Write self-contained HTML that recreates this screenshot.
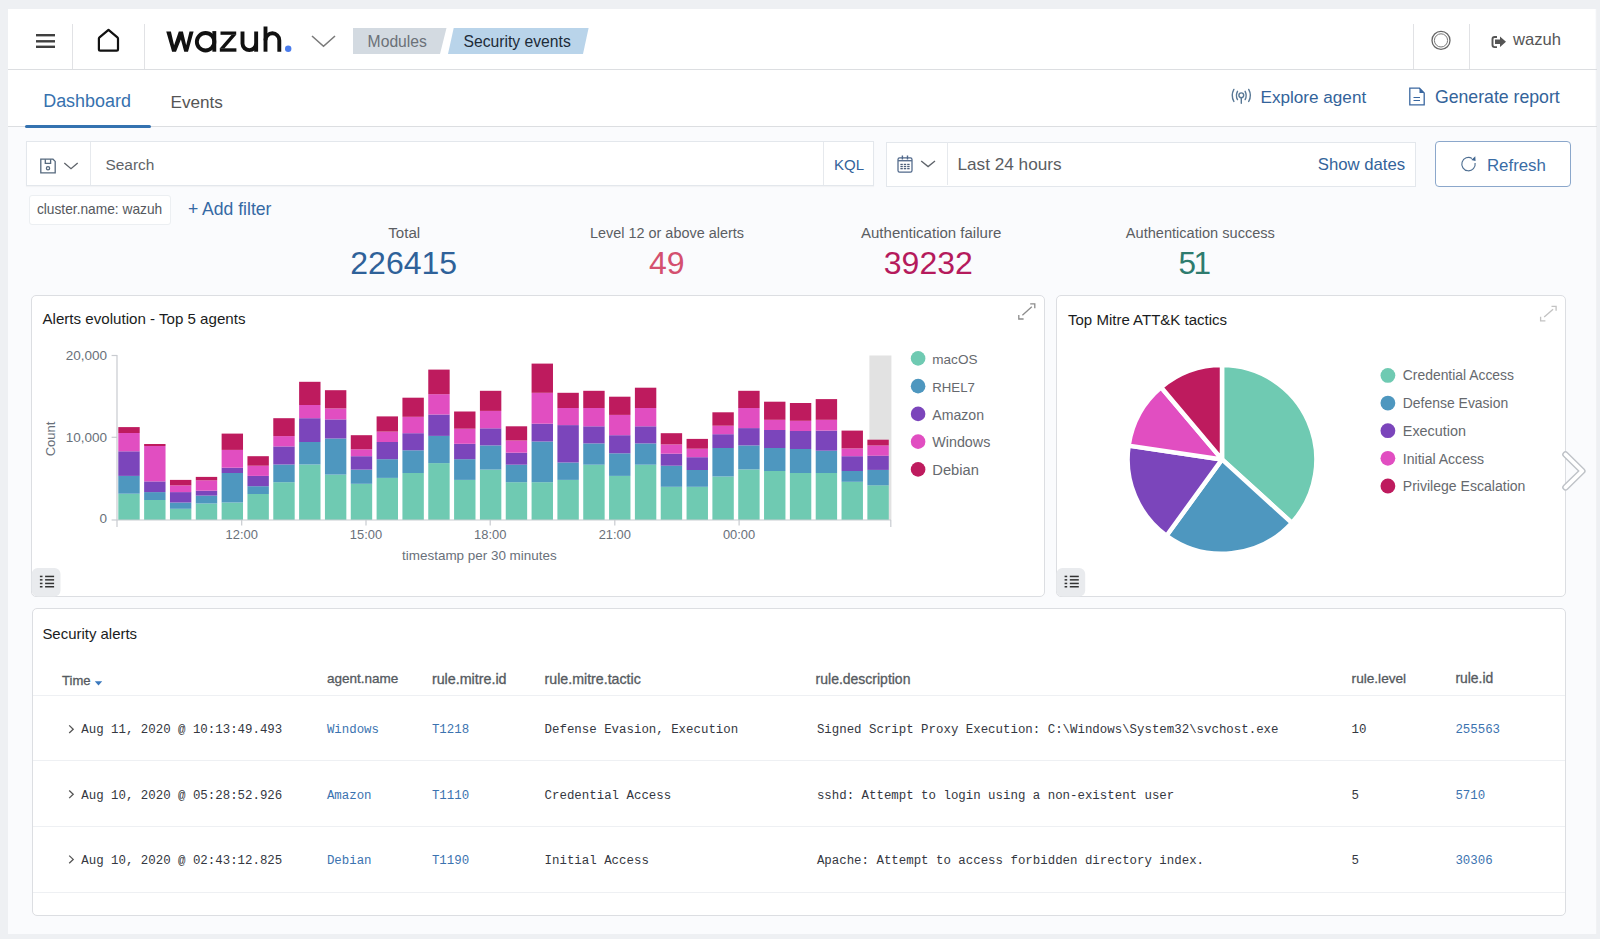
<!DOCTYPE html>
<html><head><meta charset="utf-8"><title>Wazuh - Security events</title>
<style>
html,body{margin:0;padding:0}
body{width:1600px;height:939px;position:relative;overflow:hidden;background:#eef0f3;font-family:'Liberation Sans', sans-serif}
svg{overflow:visible}
</style></head><body>
<div style="position:absolute;left:8px;top:9px;width:1589px;height:925px;background:#f1f2f4"></div>
<div style="position:absolute;left:8px;top:9px;width:1588px;height:925px;background:#fafbfd"></div>
<div style="position:absolute;left:8px;top:9px;width:1587px;height:60px;background:#fff"></div>
<div style="position:absolute;left:8px;top:69px;width:1589px;height:1px;background:#dcdee1"></div>
<div style="position:absolute;left:72px;top:24px;width:1px;height:45px;background:#e1e2e5"></div>
<div style="position:absolute;left:144px;top:24px;width:1px;height:45px;background:#e1e2e5"></div>
<div style="position:absolute;left:1413px;top:24px;width:1px;height:45px;background:#e1e2e5"></div>
<div style="position:absolute;left:1468.6px;top:24px;width:1px;height:45px;background:#e1e2e5"></div>
<div style="position:absolute;left:8px;top:70px;width:1587px;height:56px;background:#fff"></div>
<div style="position:absolute;left:8px;top:126px;width:1589px;height:1px;background:#dcdee1"></div>
<div style="position:absolute;left:25px;top:124.9px;width:126px;height:3px;background:#3472b0;border-radius:1.5px"></div>
<svg style="position:absolute;left:0px;top:0px" width="1600" height="939" viewBox="0 0 1600 939">
<g fill="#3f3f3f"><rect x="36" y="34" width="19" height="2.4"/><rect x="36" y="40.1" width="19" height="2.4"/><rect x="36" y="45.6" width="19" height="2.4"/></g>
<path d="M98.9,49.2 Q98.9,50.6 100.3,50.6 H116.6 Q118,50.6 118,49.2 V38.6 Q118,37.8 117.4,37.3 L108.5,29.8 L99.5,37.3 Q98.9,37.8 98.9,38.6 Z" fill="none" stroke="#111" stroke-width="2.2" stroke-linejoin="round"/>
<polygon points="166.25,31.5 170.9,31.5 174.1,45.3 178.8,31.5 182.9,31.5 186.2,45.3 189.5,31.5 193.6,31.5 188,51.75 184.25,51.75 180.9,39.5 176,51.75 172.1,51.75" fill="#111"/>
<g fill="none" stroke="#111" stroke-width="3.9">
<circle cx="205.6" cy="41.8" r="8.75"/>
<path d="M214.3,31.1 V51.7"/>
<path d="M242.5,31.5 V43.6 A6.83,6.83 0 0 0 256.15,43.6"/><path d="M256.15,31.5 V51.7"/>
<path d="M265.5,26.5 V51.7"/><path d="M265.5,40.15 A6.9,6.9 0 0 1 279.3,40.15 V51.7"/>
</g>
<g fill="#111"><rect x="220.5" y="31.5" width="15.7" height="3.3"/><rect x="219.8" y="48.3" width="16.6" height="3.4"/><polygon points="231.6,34.7 236.2,34.7 224.3,48.4 219.7,48.4"/></g>
<circle cx="288.2" cy="48.8" r="3.2" fill="#4a7cec"/>
<path d="M312,36 L323.5,46.3 L335,36" fill="none" stroke="#7a7a7a" stroke-width="1.6"/>
<polygon points="353,28 446.5,28 440,54 353,54" fill="#d3dae1"/>
<polygon points="453.7,28 588.6,28 583,54 448,54" fill="#b9d4ea"/>
<circle cx="1441" cy="40.4" r="9" fill="none" stroke="#666" stroke-width="1.3"/>
<circle cx="1441" cy="40.4" r="6.6" fill="none" stroke="#777" stroke-width="1"/>
<path d="M1497,37 H1494.6 Q1492.5,37 1492.5,39.1 V45 Q1492.5,47.1 1494.6,47.1 H1497" fill="none" stroke="#555" stroke-width="1.9"/>
<path d="M1495,39.5 H1500 V36.5 L1506,41.8 L1500,47 V44 H1495 Z" fill="#555"/>
</svg>
<div style="position:absolute;left:367.6px;top:33.95px;font:normal 15.7px/1 'Liberation Sans', sans-serif;color:#6b7178;white-space:pre;">Modules</div>
<div style="position:absolute;left:463.5px;top:33.95px;font:normal 15.7px/1 'Liberation Sans', sans-serif;color:#1d2b38;white-space:pre;">Security events</div>
<div style="position:absolute;left:1513px;top:31.99px;font:normal 16.6px/1 'Liberation Sans', sans-serif;color:#555;white-space:pre;">wazuh</div>
<div style="position:absolute;left:43.2px;top:93.44px;font:normal 17.95px/1 'Liberation Sans', sans-serif;color:#3671ae;white-space:pre;">Dashboard</div>
<div style="position:absolute;left:170.5px;top:93.71px;font:normal 17.17px/1 'Liberation Sans', sans-serif;color:#555;white-space:pre;">Events</div>
<svg style="position:absolute;left:0px;top:0px" width="1600" height="939" viewBox="0 0 1600 939">
<g fill="none" stroke="#587896" stroke-width="1.4" stroke-linecap="round">
<circle cx="1241.3" cy="95.3" r="2.4"/>
<path d="M1241.3,97.7 V103.3"/>
<path d="M1233.9,89.4 A12.4,12.4 0 0 0 1233.9,101.5"/><path d="M1248.7,89.4 A12.4,12.4 0 0 1 1248.7,101.5"/>
<path d="M1237.5,91.3 A8.8,8.8 0 0 0 1237.5,99.6"/><path d="M1245.1,91.3 A8.8,8.8 0 0 1 1245.1,99.6"/>
</g>
<g fill="none" stroke="#3a67a0" stroke-width="1.3">
<path d="M1409.8,88.2 H1419.5 L1424.2,93 V104.9 H1409.8 Z"/>
<path d="M1413.5,97.5 H1420 M1413.5,100.5 H1420" stroke-width="1"/>
</g>
<path d="M1419.5,88.2 L1424.2,93 H1419.5 Z" fill="#3a67a0"/>
</svg>
<div style="position:absolute;left:1260.5px;top:88.68px;font:normal 17.14px/1 'Liberation Sans', sans-serif;color:#33639a;white-space:pre;">Explore agent</div>
<div style="position:absolute;left:1434.9px;top:89.06px;font:normal 17.69px/1 'Liberation Sans', sans-serif;color:#33639a;white-space:pre;">Generate report</div>
<div style="position:absolute;left:26px;top:141px;width:848px;height:45px;background:#fff;border:1px solid #e3e7ec;box-sizing:border-box;box-shadow:0 1px 1px rgba(0,0,0,0.03)"></div>
<div style="position:absolute;left:90px;top:142px;width:1px;height:43px;background:#e6e9ed"></div>
<div style="position:absolute;left:823px;top:142px;width:1px;height:43px;background:#e6e9ed"></div>
<div style="position:absolute;left:885.5px;top:141.5px;width:530.5px;height:45px;background:#fff;border:1px solid #e3e7ec;box-sizing:border-box"></div>
<div style="position:absolute;left:947px;top:142px;width:1px;height:43px;background:#e6e9ed"></div>
<div style="position:absolute;left:1435.3px;top:141px;width:135.4px;height:45.6px;background:#fff;border:1.3px solid #8ba7cb;border-radius:4px;box-sizing:border-box"></div>
<svg style="position:absolute;left:0px;top:0px" width="1600" height="939" viewBox="0 0 1600 939">
<g fill="none" stroke="#56697e" stroke-width="1.3">
<path d="M40.8,159.2 H53 L55.2,161.4 V172.9 H40.8 Z"/>
<path d="M45.3,159.2 V163.3 H50.6 V159.2"/>
<circle cx="48" cy="168.3" r="1.6"/>
</g>
<path d="M64.3,163 L71,168.7 L77.7,163" fill="none" stroke="#5f646b" stroke-width="1.35"/>
<g fill="none" stroke="#50688a" stroke-width="1.25">
<rect x="898" y="157.8" width="14" height="14.2" rx="1.6"/>
<path d="M902.4,155.6 V159.6 M907.5,155.6 V159.6" stroke-width="1.4"/>
</g>
<rect x="898" y="160" width="14" height="1.4" fill="#5a7090"/>
<g fill="#4d5f7a"><rect x="900.4" y="163.8" width="2.4" height="1.3"/><rect x="903.8" y="163.8" width="2.4" height="1.3"/><rect x="907.2" y="163.8" width="2.4" height="1.3"/>
<rect x="900.4" y="165.9" width="2.4" height="1.3"/><rect x="903.8" y="165.9" width="2.4" height="1.3"/><rect x="907.2" y="165.9" width="2.4" height="1.3"/>
<rect x="900.4" y="168" width="2.4" height="1.3"/><rect x="903.8" y="168" width="2.4" height="1.3"/><rect x="907.2" y="168" width="2.4" height="1.3"/></g>
<path d="M921.2,161 L928.1,166.6 L935,161" fill="none" stroke="#5f646b" stroke-width="1.35"/>
<path d="M1472,158.4 A6.7,6.7 0 1 0 1475.1,163" fill="none" stroke="#4f6f92" stroke-width="1.15"/>
<path d="M1475.3,156.3 L1475.6,160.9 L1471.3,159.9 Z" fill="#3f6590"/>
</svg>
<div style="position:absolute;left:105.5px;top:157.28px;font:normal 15.43px/1 'Liberation Sans', sans-serif;color:#5f6368;white-space:pre;">Search</div>
<div style="position:absolute;left:834px;top:157.35px;font:normal 15px/1 'Liberation Sans', sans-serif;color:#33639a;white-space:pre;">KQL</div>
<div style="position:absolute;left:957.5px;top:155.50px;font:normal 17.18px/1 'Liberation Sans', sans-serif;color:#5a5d62;white-space:pre;">Last 24 hours</div>
<div style="position:absolute;left:1317.75px;top:156.57px;font:normal 16.74px/1 'Liberation Sans', sans-serif;color:#33639a;white-space:pre;">Show dates</div>
<div style="position:absolute;left:1486.9px;top:158.15px;font:normal 16.88px/1 'Liberation Sans', sans-serif;color:#3a6ca5;white-space:pre;">Refresh</div>
<div style="position:absolute;left:28.6px;top:195.2px;width:142.6px;height:29.4px;background:#fff;border:1px solid #eceff2;border-radius:3px;box-sizing:border-box"></div>
<div style="position:absolute;left:36.9px;top:203.10px;font:normal 13.76px/1 'Liberation Sans', sans-serif;color:#55585d;white-space:pre;">cluster.name: wazuh</div>
<div style="position:absolute;left:187.9px;top:200.95px;font:normal 17.59px/1 'Liberation Sans', sans-serif;color:#3569a4;white-space:pre;">+ Add filter</div>
<div style="position:absolute;left:388.3px;top:224.86px;font:normal 15.1px/1 'Liberation Sans', sans-serif;color:#5b5e63;white-space:pre;">Total</div>
<div style="position:absolute;left:590px;top:226.13px;font:normal 14.43px/1 'Liberation Sans', sans-serif;color:#5b5e63;white-space:pre;">Level 12 or above alerts</div>
<div style="position:absolute;left:861px;top:224.93px;font:normal 15.02px/1 'Liberation Sans', sans-serif;color:#5b5e63;white-space:pre;">Authentication failure</div>
<div style="position:absolute;left:1125.8px;top:226.00px;font:normal 14.59px/1 'Liberation Sans', sans-serif;color:#5b5e63;white-space:pre;">Authentication success</div>
<div style="position:absolute;left:350.3px;top:247.30px;font:normal 32px/1 'Liberation Sans', sans-serif;color:#2e6199;white-space:pre;">226415</div>
<div style="position:absolute;left:649px;top:247.30px;font:normal 32px/1 'Liberation Sans', sans-serif;color:#d4506f;white-space:pre;">49</div>
<div style="position:absolute;left:883.8px;top:247.30px;font:normal 32px/1 'Liberation Sans', sans-serif;color:#b51a5c;white-space:pre;">39232</div>
<div style="position:absolute;left:1178.5px;top:247.72px;font:normal 31.5px/1 'Liberation Sans', sans-serif;color:#2e7b6e;white-space:pre;letter-spacing:-2.5px">51</div>
<div style="position:absolute;left:31px;top:295px;width:1014px;height:302px;background:#fff;border:1px solid #dcdee2;border-radius:5px;box-sizing:border-box"></div>
<div style="position:absolute;left:1056px;top:295px;width:510px;height:302px;background:#fff;border:1px solid #dcdee2;border-radius:5px;box-sizing:border-box"></div>
<div style="position:absolute;left:31.5px;top:608px;width:1534px;height:308px;background:#fff;border:1px solid #dcdee2;border-radius:5px;box-sizing:border-box"></div>
<div style="position:absolute;left:42.5px;top:311.46px;font:normal 15.11px/1 'Liberation Sans', sans-serif;color:#1a1c21;white-space:pre;">Alerts evolution - Top 5 agents</div>
<div style="position:absolute;left:1068px;top:311.72px;font:normal 15.03px/1 'Liberation Sans', sans-serif;color:#1a1c21;white-space:pre;">Top Mitre ATT&amp;K tactics</div>
<div style="position:absolute;left:42.4px;top:626.54px;font:normal 14.95px/1 'Liberation Sans', sans-serif;color:#1a1c21;white-space:pre;">Security alerts</div>
<svg style="position:absolute;left:0px;top:0px" width="1600" height="939" viewBox="0 0 1600 939"><g fill="none" stroke="#8c8c8c" stroke-width="1.3"><path d="M1022.4,315.2 L1031.8000000000002,306.8"/><path d="M1018.8,314.9 V319.0 H1023.6"/><path d="M1030.2,303.9 H1034.8000000000002 V308.3"/></g><g fill="none" stroke="#c2c2c2" stroke-width="1.3"><path d="M1544.2,317.09999999999997 L1553.1000000000001,309.3"/><path d="M1540.6000000000001,316.79999999999995 V320.9 H1545.4"/><path d="M1551.5,306.4 H1556.1000000000001 V310.8"/></g><rect x="31.7" y="568" width="28.8" height="28.4" rx="6" fill="#e9ebee"/><g fill="#333"><rect x="39.9" y="575.6999999999999" width="2.6" height="1.5"/><rect x="45.1" y="575.6999999999999" width="9" height="1.5"/><rect x="39.9" y="579.0999999999999" width="2.6" height="1.5"/><rect x="45.1" y="579.0999999999999" width="9" height="1.5"/><rect x="39.9" y="582.6999999999999" width="2.6" height="1.5"/><rect x="45.1" y="582.6999999999999" width="9" height="1.5"/><rect x="39.9" y="586.0" width="2.6" height="1.5"/><rect x="45.1" y="586.0" width="9" height="1.5"/></g><rect x="1056.4" y="568" width="28.8" height="28.4" rx="6" fill="#e9ebee"/><g fill="#333"><rect x="1064.6000000000001" y="575.6999999999999" width="2.6" height="1.5"/><rect x="1069.8000000000002" y="575.6999999999999" width="9" height="1.5"/><rect x="1064.6000000000001" y="579.0999999999999" width="2.6" height="1.5"/><rect x="1069.8000000000002" y="579.0999999999999" width="9" height="1.5"/><rect x="1064.6000000000001" y="582.6999999999999" width="2.6" height="1.5"/><rect x="1069.8000000000002" y="582.6999999999999" width="9" height="1.5"/><rect x="1064.6000000000001" y="586.0" width="2.6" height="1.5"/><rect x="1069.8000000000002" y="586.0" width="9" height="1.5"/></g></svg>
<svg style="position:absolute;left:0px;top:0px" width="1600" height="939" viewBox="0 0 1600 939"><rect x="869.4" y="355.5" width="22" height="164.5" fill="#e2e2e2"/><rect x="118.30" y="493.7" width="21.4" height="26.30" fill="#6fcab2"/><rect x="118.30" y="475.9" width="21.4" height="17.80" fill="#4e97bf"/><rect x="118.30" y="451.3" width="21.4" height="24.60" fill="#7b45bb"/><rect x="118.30" y="433" width="21.4" height="18.30" fill="#e14ec1"/><rect x="118.30" y="427.1" width="21.4" height="5.90" fill="#be1b5e"/><rect x="144.13" y="500" width="21.4" height="20.00" fill="#6fcab2"/><rect x="144.13" y="492.1" width="21.4" height="7.90" fill="#4e97bf"/><rect x="144.13" y="481.4" width="21.4" height="10.70" fill="#7b45bb"/><rect x="144.13" y="446" width="21.4" height="35.40" fill="#e14ec1"/><rect x="144.13" y="444" width="21.4" height="2.00" fill="#be1b5e"/><rect x="169.96" y="508.8" width="21.4" height="11.20" fill="#6fcab2"/><rect x="169.96" y="502.5" width="21.4" height="6.30" fill="#4e97bf"/><rect x="169.96" y="492.1" width="21.4" height="10.40" fill="#7b45bb"/><rect x="169.96" y="485.4" width="21.4" height="6.70" fill="#e14ec1"/><rect x="169.96" y="479.9" width="21.4" height="5.50" fill="#be1b5e"/><rect x="195.79" y="503.5" width="21.4" height="16.50" fill="#6fcab2"/><rect x="195.79" y="495.6" width="21.4" height="7.90" fill="#4e97bf"/><rect x="195.79" y="490.7" width="21.4" height="4.90" fill="#7b45bb"/><rect x="195.79" y="480.3" width="21.4" height="10.40" fill="#e14ec1"/><rect x="195.79" y="476.9" width="21.4" height="3.40" fill="#be1b5e"/><rect x="221.62" y="502.5" width="21.4" height="17.50" fill="#6fcab2"/><rect x="221.62" y="473" width="21.4" height="29.50" fill="#4e97bf"/><rect x="221.62" y="467.7" width="21.4" height="5.30" fill="#7b45bb"/><rect x="221.62" y="449.9" width="21.4" height="17.80" fill="#e14ec1"/><rect x="221.62" y="433.6" width="21.4" height="16.30" fill="#be1b5e"/><rect x="247.45" y="494" width="21.4" height="26.00" fill="#6fcab2"/><rect x="247.45" y="486.2" width="21.4" height="7.80" fill="#4e97bf"/><rect x="247.45" y="475.9" width="21.4" height="10.30" fill="#7b45bb"/><rect x="247.45" y="465.7" width="21.4" height="10.20" fill="#e14ec1"/><rect x="247.45" y="456.2" width="21.4" height="9.50" fill="#be1b5e"/><rect x="273.28" y="482.2" width="21.4" height="37.80" fill="#6fcab2"/><rect x="273.28" y="464.5" width="21.4" height="17.70" fill="#4e97bf"/><rect x="273.28" y="446.4" width="21.4" height="18.10" fill="#7b45bb"/><rect x="273.28" y="436.1" width="21.4" height="10.30" fill="#e14ec1"/><rect x="273.28" y="418.2" width="21.4" height="17.90" fill="#be1b5e"/><rect x="299.11" y="464.5" width="21.4" height="55.50" fill="#6fcab2"/><rect x="299.11" y="442" width="21.4" height="22.50" fill="#4e97bf"/><rect x="299.11" y="418.2" width="21.4" height="23.80" fill="#7b45bb"/><rect x="299.11" y="405" width="21.4" height="13.20" fill="#e14ec1"/><rect x="299.11" y="381.8" width="21.4" height="23.20" fill="#be1b5e"/><rect x="324.94" y="474.6" width="21.4" height="45.40" fill="#6fcab2"/><rect x="324.94" y="438.5" width="21.4" height="36.10" fill="#4e97bf"/><rect x="324.94" y="419.4" width="21.4" height="19.10" fill="#7b45bb"/><rect x="324.94" y="408.4" width="21.4" height="11.00" fill="#e14ec1"/><rect x="324.94" y="390.2" width="21.4" height="18.20" fill="#be1b5e"/><rect x="350.77" y="483.8" width="21.4" height="36.20" fill="#6fcab2"/><rect x="350.77" y="469.6" width="21.4" height="14.20" fill="#4e97bf"/><rect x="350.77" y="456.2" width="21.4" height="13.40" fill="#7b45bb"/><rect x="350.77" y="449.3" width="21.4" height="6.90" fill="#e14ec1"/><rect x="350.77" y="435.2" width="21.4" height="14.10" fill="#be1b5e"/><rect x="376.60" y="477.9" width="21.4" height="42.10" fill="#6fcab2"/><rect x="376.60" y="459.2" width="21.4" height="18.70" fill="#4e97bf"/><rect x="376.60" y="442" width="21.4" height="17.20" fill="#7b45bb"/><rect x="376.60" y="431.6" width="21.4" height="10.40" fill="#e14ec1"/><rect x="376.60" y="416.4" width="21.4" height="15.20" fill="#be1b5e"/><rect x="402.43" y="473" width="21.4" height="47.00" fill="#6fcab2"/><rect x="402.43" y="450.3" width="21.4" height="22.70" fill="#4e97bf"/><rect x="402.43" y="433.2" width="21.4" height="17.10" fill="#7b45bb"/><rect x="402.43" y="416.8" width="21.4" height="16.40" fill="#e14ec1"/><rect x="402.43" y="397.7" width="21.4" height="19.10" fill="#be1b5e"/><rect x="428.26" y="463.1" width="21.4" height="56.90" fill="#6fcab2"/><rect x="428.26" y="435.9" width="21.4" height="27.20" fill="#4e97bf"/><rect x="428.26" y="414.5" width="21.4" height="21.40" fill="#7b45bb"/><rect x="428.26" y="394.2" width="21.4" height="20.30" fill="#e14ec1"/><rect x="428.26" y="369.6" width="21.4" height="24.60" fill="#be1b5e"/><rect x="454.09" y="479.9" width="21.4" height="40.10" fill="#6fcab2"/><rect x="454.09" y="459.2" width="21.4" height="20.70" fill="#4e97bf"/><rect x="454.09" y="443.8" width="21.4" height="15.40" fill="#7b45bb"/><rect x="454.09" y="428.7" width="21.4" height="15.10" fill="#e14ec1"/><rect x="454.09" y="411.5" width="21.4" height="17.20" fill="#be1b5e"/><rect x="479.92" y="469.6" width="21.4" height="50.40" fill="#6fcab2"/><rect x="479.92" y="445.4" width="21.4" height="24.20" fill="#4e97bf"/><rect x="479.92" y="428.3" width="21.4" height="17.10" fill="#7b45bb"/><rect x="479.92" y="410.9" width="21.4" height="17.40" fill="#e14ec1"/><rect x="479.92" y="390.8" width="21.4" height="20.10" fill="#be1b5e"/><rect x="505.75" y="482.2" width="21.4" height="37.80" fill="#6fcab2"/><rect x="505.75" y="464.7" width="21.4" height="17.50" fill="#4e97bf"/><rect x="505.75" y="452.7" width="21.4" height="12.00" fill="#7b45bb"/><rect x="505.75" y="440.5" width="21.4" height="12.20" fill="#e14ec1"/><rect x="505.75" y="426.3" width="21.4" height="14.20" fill="#be1b5e"/><rect x="531.58" y="482.2" width="21.4" height="37.80" fill="#6fcab2"/><rect x="531.58" y="441.5" width="21.4" height="40.70" fill="#4e97bf"/><rect x="531.58" y="423.7" width="21.4" height="17.80" fill="#7b45bb"/><rect x="531.58" y="392.8" width="21.4" height="30.90" fill="#e14ec1"/><rect x="531.58" y="363.6" width="21.4" height="29.20" fill="#be1b5e"/><rect x="557.41" y="479.9" width="21.4" height="40.10" fill="#6fcab2"/><rect x="557.41" y="462.5" width="21.4" height="17.40" fill="#4e97bf"/><rect x="557.41" y="425.1" width="21.4" height="37.40" fill="#7b45bb"/><rect x="557.41" y="408" width="21.4" height="17.10" fill="#e14ec1"/><rect x="557.41" y="392.8" width="21.4" height="15.20" fill="#be1b5e"/><rect x="583.24" y="464.7" width="21.4" height="55.30" fill="#6fcab2"/><rect x="583.24" y="443.4" width="21.4" height="21.30" fill="#4e97bf"/><rect x="583.24" y="426.3" width="21.4" height="17.10" fill="#7b45bb"/><rect x="583.24" y="408" width="21.4" height="18.30" fill="#e14ec1"/><rect x="583.24" y="390.8" width="21.4" height="17.20" fill="#be1b5e"/><rect x="609.07" y="475.9" width="21.4" height="44.10" fill="#6fcab2"/><rect x="609.07" y="453.3" width="21.4" height="22.60" fill="#4e97bf"/><rect x="609.07" y="435.2" width="21.4" height="18.10" fill="#7b45bb"/><rect x="609.07" y="414.9" width="21.4" height="20.30" fill="#e14ec1"/><rect x="609.07" y="396.7" width="21.4" height="18.20" fill="#be1b5e"/><rect x="634.90" y="464.7" width="21.4" height="55.30" fill="#6fcab2"/><rect x="634.90" y="443.4" width="21.4" height="21.30" fill="#4e97bf"/><rect x="634.90" y="426.3" width="21.4" height="17.10" fill="#7b45bb"/><rect x="634.90" y="408" width="21.4" height="18.30" fill="#e14ec1"/><rect x="634.90" y="387.7" width="21.4" height="20.30" fill="#be1b5e"/><rect x="660.73" y="486.8" width="21.4" height="33.20" fill="#6fcab2"/><rect x="660.73" y="465.7" width="21.4" height="21.10" fill="#4e97bf"/><rect x="660.73" y="453.7" width="21.4" height="12.00" fill="#7b45bb"/><rect x="660.73" y="444.4" width="21.4" height="9.30" fill="#e14ec1"/><rect x="660.73" y="433.2" width="21.4" height="11.20" fill="#be1b5e"/><rect x="686.56" y="486.8" width="21.4" height="33.20" fill="#6fcab2"/><rect x="686.56" y="470" width="21.4" height="16.80" fill="#4e97bf"/><rect x="686.56" y="457.2" width="21.4" height="12.80" fill="#7b45bb"/><rect x="686.56" y="448.7" width="21.4" height="8.50" fill="#e14ec1"/><rect x="686.56" y="438.9" width="21.4" height="9.80" fill="#be1b5e"/><rect x="712.39" y="476.5" width="21.4" height="43.50" fill="#6fcab2"/><rect x="712.39" y="448" width="21.4" height="28.50" fill="#4e97bf"/><rect x="712.39" y="434.2" width="21.4" height="13.80" fill="#7b45bb"/><rect x="712.39" y="425.7" width="21.4" height="8.50" fill="#e14ec1"/><rect x="712.39" y="412.3" width="21.4" height="13.40" fill="#be1b5e"/><rect x="738.22" y="469.4" width="21.4" height="50.60" fill="#6fcab2"/><rect x="738.22" y="445.4" width="21.4" height="24.00" fill="#4e97bf"/><rect x="738.22" y="428.1" width="21.4" height="17.30" fill="#7b45bb"/><rect x="738.22" y="408" width="21.4" height="20.10" fill="#e14ec1"/><rect x="738.22" y="390.8" width="21.4" height="17.20" fill="#be1b5e"/><rect x="764.05" y="471" width="21.4" height="49.00" fill="#6fcab2"/><rect x="764.05" y="448" width="21.4" height="23.00" fill="#4e97bf"/><rect x="764.05" y="430" width="21.4" height="18.00" fill="#7b45bb"/><rect x="764.05" y="419.8" width="21.4" height="10.20" fill="#e14ec1"/><rect x="764.05" y="401.7" width="21.4" height="18.10" fill="#be1b5e"/><rect x="789.88" y="473" width="21.4" height="47.00" fill="#6fcab2"/><rect x="789.88" y="449" width="21.4" height="24.00" fill="#4e97bf"/><rect x="789.88" y="431" width="21.4" height="18.00" fill="#7b45bb"/><rect x="789.88" y="420.8" width="21.4" height="10.20" fill="#e14ec1"/><rect x="789.88" y="403" width="21.4" height="17.80" fill="#be1b5e"/><rect x="815.71" y="473" width="21.4" height="47.00" fill="#6fcab2"/><rect x="815.71" y="450.7" width="21.4" height="22.30" fill="#4e97bf"/><rect x="815.71" y="430.6" width="21.4" height="20.10" fill="#7b45bb"/><rect x="815.71" y="419.8" width="21.4" height="10.80" fill="#e14ec1"/><rect x="815.71" y="399.1" width="21.4" height="20.70" fill="#be1b5e"/><rect x="841.54" y="481.8" width="21.4" height="38.20" fill="#6fcab2"/><rect x="841.54" y="471" width="21.4" height="10.80" fill="#4e97bf"/><rect x="841.54" y="456.2" width="21.4" height="14.80" fill="#7b45bb"/><rect x="841.54" y="448.4" width="21.4" height="7.80" fill="#e14ec1"/><rect x="841.54" y="430.6" width="21.4" height="17.80" fill="#be1b5e"/><rect x="867.37" y="485.3" width="21.4" height="34.70" fill="#6fcab2"/><rect x="867.37" y="469.9" width="21.4" height="15.40" fill="#4e97bf"/><rect x="867.37" y="455.7" width="21.4" height="14.20" fill="#7b45bb"/><rect x="867.37" y="445.4" width="21.4" height="10.30" fill="#e14ec1"/><rect x="867.37" y="439.7" width="21.4" height="5.70" fill="#be1b5e"/><path d="M117,355 V527 M890.8,520 V527 M117,520 H891" stroke="#c8cbd0" stroke-width="1.2" fill="none"/><path d="M111.6,355.5 H117" stroke="#c8cbd0" stroke-width="1.2"/><path d="M111.6,437.3 H117" stroke="#c8cbd0" stroke-width="1.2"/><path d="M111.6,520 H117" stroke="#c8cbd0" stroke-width="1.2"/><path d="M241.7,520 V525.5" stroke="#c8cbd0" stroke-width="1.2"/><path d="M366,520 V525.5" stroke="#c8cbd0" stroke-width="1.2"/><path d="M490.2,520 V525.5" stroke="#c8cbd0" stroke-width="1.2"/><path d="M614.8,520 V525.5" stroke="#c8cbd0" stroke-width="1.2"/><path d="M739.1,520 V525.5" stroke="#c8cbd0" stroke-width="1.2"/><circle cx="918.1" cy="358.40" r="7.3" fill="#6fcab2"/><circle cx="918.1" cy="386.15" r="7.3" fill="#4e97bf"/><circle cx="918.1" cy="413.90" r="7.3" fill="#7b45bb"/><circle cx="918.1" cy="441.65" r="7.3" fill="#e14ec1"/><circle cx="918.1" cy="469.40" r="7.3" fill="#be1b5e"/></svg>
<div style="position:absolute;right:1493px;top:348.82px;font:normal 13.5px/1 'Liberation Sans', sans-serif;color:#69707a;white-space:pre;">20,000</div>
<div style="position:absolute;right:1493px;top:431.22px;font:normal 13.5px/1 'Liberation Sans', sans-serif;color:#69707a;white-space:pre;">10,000</div>
<div style="position:absolute;right:1493px;top:511.52px;font:normal 13.5px/1 'Liberation Sans', sans-serif;color:#69707a;white-space:pre;">0</div>
<div style="position:absolute;left:20.6px;top:431.6px;width:60px;text-align:center;font:13px/1 'Liberation Sans', sans-serif;color:#69707a;transform:rotate(-90deg);transform-origin:30px 7px">Count</div>
<div style="position:absolute;left:-58.30000000000001px;width:600px;text-align:center;top:529.03px;font:normal 12.9px/1 'Liberation Sans', sans-serif;color:#69707a;white-space:pre;">12:00</div>
<div style="position:absolute;left:66px;width:600px;text-align:center;top:529.03px;font:normal 12.9px/1 'Liberation Sans', sans-serif;color:#69707a;white-space:pre;">15:00</div>
<div style="position:absolute;left:190.2px;width:600px;text-align:center;top:529.03px;font:normal 12.9px/1 'Liberation Sans', sans-serif;color:#69707a;white-space:pre;">18:00</div>
<div style="position:absolute;left:314.79999999999995px;width:600px;text-align:center;top:529.03px;font:normal 12.9px/1 'Liberation Sans', sans-serif;color:#69707a;white-space:pre;">21:00</div>
<div style="position:absolute;left:439.1px;width:600px;text-align:center;top:529.03px;font:normal 12.9px/1 'Liberation Sans', sans-serif;color:#69707a;white-space:pre;">00:00</div>
<div style="position:absolute;left:179.39999999999998px;width:600px;text-align:center;top:548.57px;font:normal 13.45px/1 'Liberation Sans', sans-serif;color:#69707a;white-space:pre;">timestamp per 30 minutes</div>
<div style="position:absolute;left:932.3px;top:352.58px;font:normal 13.55px/1 'Liberation Sans', sans-serif;color:#66696e;white-space:pre;">macOS</div>
<div style="position:absolute;left:932.3px;top:380.63px;font:normal 13.2px/1 'Liberation Sans', sans-serif;color:#66696e;white-space:pre;">RHEL7</div>
<div style="position:absolute;left:932.3px;top:407.61px;font:normal 14.1px/1 'Liberation Sans', sans-serif;color:#66696e;white-space:pre;">Amazon</div>
<div style="position:absolute;left:932.3px;top:435.19px;font:normal 14.3px/1 'Liberation Sans', sans-serif;color:#66696e;white-space:pre;">Windows</div>
<div style="position:absolute;left:932.3px;top:462.60px;font:normal 14.7px/1 'Liberation Sans', sans-serif;color:#66696e;white-space:pre;">Debian</div>
<svg style="position:absolute;left:0px;top:0px" width="1600" height="939" viewBox="0 0 1600 939"><path d="M1222,459.4 L1222.00,365.00 A94.4,94.4 0 0 1 1291.82,522.93 Z" fill="#6fcab2" stroke="#fff" stroke-width="4.5" stroke-linejoin="round"/><path d="M1222,459.4 L1291.82,522.93 A94.4,94.4 0 0 1 1166.51,535.77 Z" fill="#4e97bf" stroke="#fff" stroke-width="4.5" stroke-linejoin="round"/><path d="M1222,459.4 L1166.51,535.77 A94.4,94.4 0 0 1 1128.61,445.61 Z" fill="#7b45bb" stroke="#fff" stroke-width="4.5" stroke-linejoin="round"/><path d="M1222,459.4 L1128.61,445.61 A94.4,94.4 0 0 1 1161.07,387.30 Z" fill="#e14ec1" stroke="#fff" stroke-width="4.5" stroke-linejoin="round"/><path d="M1222,459.4 L1161.07,387.30 A94.4,94.4 0 0 1 1222.00,365.00 Z" fill="#be1b5e" stroke="#fff" stroke-width="4.5" stroke-linejoin="round"/><circle cx="1387.9" cy="375.40" r="7.4" fill="#6fcab2"/><circle cx="1387.9" cy="403.05" r="7.4" fill="#4e97bf"/><circle cx="1387.9" cy="430.70" r="7.4" fill="#7b45bb"/><circle cx="1387.9" cy="458.35" r="7.4" fill="#e14ec1"/><circle cx="1387.9" cy="486.00" r="7.4" fill="#be1b5e"/><path d="M1565.5,454.5 L1582.3,471 L1565.5,487.3" fill="none" stroke="#bfc3c8" stroke-width="6.6" stroke-linecap="round" stroke-linejoin="round"/><path d="M1565.5,454.5 L1582.3,471 L1565.5,487.3" fill="none" stroke="#fff" stroke-width="3.8" stroke-linecap="round" stroke-linejoin="round"/></svg>
<div style="position:absolute;left:1402.8px;top:368.99px;font:normal 13.9px/1 'Liberation Sans', sans-serif;color:#66696e;white-space:pre;">Credential Access</div>
<div style="position:absolute;left:1402.8px;top:396.59px;font:normal 13.95px/1 'Liberation Sans', sans-serif;color:#66696e;white-space:pre;">Defense Evasion</div>
<div style="position:absolute;left:1402.8px;top:423.86px;font:normal 14.4px/1 'Liberation Sans', sans-serif;color:#66696e;white-space:pre;">Execution</div>
<div style="position:absolute;left:1402.8px;top:451.81px;font:normal 14.05px/1 'Liberation Sans', sans-serif;color:#66696e;white-space:pre;">Initial Access</div>
<div style="position:absolute;left:1402.8px;top:479.46px;font:normal 14.05px/1 'Liberation Sans', sans-serif;color:#66696e;white-space:pre;">Privilege Escalation</div>
<div style="position:absolute;left:62.1px;top:674.02px;font:normal 13.04px/1 'Liberation Sans', sans-serif;color:#555a60;white-space:pre;-webkit-text-stroke:0.3px #555a60">Time</div>
<svg style="position:absolute;left:0px;top:0px" width="1600" height="939" viewBox="0 0 1600 939"><path d="M94.8,681.2 H102.2 L98.5,685.6 Z" fill="#3a78bd"/></svg>
<div style="position:absolute;left:326.9px;top:672.19px;font:normal 13.54px/1 'Liberation Sans', sans-serif;color:#555a60;white-space:pre;-webkit-text-stroke:0.3px #555a60">agent.name</div>
<div style="position:absolute;left:431.9px;top:671.55px;font:normal 14.3px/1 'Liberation Sans', sans-serif;color:#555a60;white-space:pre;-webkit-text-stroke:0.3px #555a60">rule.mitre.id</div>
<div style="position:absolute;left:544.6px;top:671.64px;font:normal 14.19px/1 'Liberation Sans', sans-serif;color:#555a60;white-space:pre;-webkit-text-stroke:0.3px #555a60">rule.mitre.tactic</div>
<div style="position:absolute;left:815.6px;top:671.81px;font:normal 13.99px/1 'Liberation Sans', sans-serif;color:#555a60;white-space:pre;-webkit-text-stroke:0.3px #555a60">rule.description</div>
<div style="position:absolute;left:1351.6px;top:672.11px;font:normal 13.64px/1 'Liberation Sans', sans-serif;color:#555a60;white-space:pre;-webkit-text-stroke:0.3px #555a60">rule.level</div>
<div style="position:absolute;left:1455.4px;top:671.88px;font:normal 13.91px/1 'Liberation Sans', sans-serif;color:#555a60;white-space:pre;-webkit-text-stroke:0.3px #555a60">rule.id</div>
<div style="position:absolute;left:32.5px;top:695px;width:1532px;height:1px;background:#eef0f3"></div>
<div style="position:absolute;left:32.5px;top:759.5px;width:1532px;height:1px;background:#eef0f3"></div>
<div style="position:absolute;left:32.5px;top:826px;width:1532px;height:1px;background:#eef0f3"></div>
<div style="position:absolute;left:32.5px;top:892px;width:1532px;height:1px;background:#eef0f3"></div>
<div style="position:absolute;left:81.25px;top:724.46px;font:normal 12.42px/1 'Liberation Mono', monospace;color:#343741;white-space:pre;">Aug 11, 2020 @ 10:13:49.493</div>
<div style="position:absolute;left:326.9px;top:724.46px;font:normal 12.42px/1 'Liberation Mono', monospace;color:#3b73b0;white-space:pre;">Windows</div>
<div style="position:absolute;left:431.9px;top:724.46px;font:normal 12.42px/1 'Liberation Mono', monospace;color:#3b73b0;white-space:pre;">T1218</div>
<div style="position:absolute;left:544.6px;top:724.46px;font:normal 12.42px/1 'Liberation Mono', monospace;color:#343741;white-space:pre;">Defense Evasion, Execution</div>
<div style="position:absolute;left:816.9px;top:724.46px;font:normal 12.42px/1 'Liberation Mono', monospace;color:#343741;white-space:pre;">Signed Script Proxy Execution: C:\Windows\System32\svchost.exe</div>
<div style="position:absolute;left:1351.6px;top:724.46px;font:normal 12.42px/1 'Liberation Mono', monospace;color:#343741;white-space:pre;">10</div>
<div style="position:absolute;left:1455.4px;top:724.46px;font:normal 12.42px/1 'Liberation Mono', monospace;color:#3b73b0;white-space:pre;">255563</div>
<div style="position:absolute;left:81.25px;top:789.56px;font:normal 12.42px/1 'Liberation Mono', monospace;color:#343741;white-space:pre;">Aug 10, 2020 @ 05:28:52.926</div>
<div style="position:absolute;left:326.9px;top:789.56px;font:normal 12.42px/1 'Liberation Mono', monospace;color:#3b73b0;white-space:pre;">Amazon</div>
<div style="position:absolute;left:431.9px;top:789.56px;font:normal 12.42px/1 'Liberation Mono', monospace;color:#3b73b0;white-space:pre;">T1110</div>
<div style="position:absolute;left:544.6px;top:789.56px;font:normal 12.42px/1 'Liberation Mono', monospace;color:#343741;white-space:pre;">Credential Access</div>
<div style="position:absolute;left:816.9px;top:789.56px;font:normal 12.42px/1 'Liberation Mono', monospace;color:#343741;white-space:pre;">sshd: Attempt to login using a non-existent user</div>
<div style="position:absolute;left:1351.6px;top:789.56px;font:normal 12.42px/1 'Liberation Mono', monospace;color:#343741;white-space:pre;">5</div>
<div style="position:absolute;left:1455.4px;top:789.56px;font:normal 12.42px/1 'Liberation Mono', monospace;color:#3b73b0;white-space:pre;">5710</div>
<div style="position:absolute;left:81.25px;top:854.66px;font:normal 12.42px/1 'Liberation Mono', monospace;color:#343741;white-space:pre;">Aug 10, 2020 @ 02:43:12.825</div>
<div style="position:absolute;left:326.9px;top:854.66px;font:normal 12.42px/1 'Liberation Mono', monospace;color:#3b73b0;white-space:pre;">Debian</div>
<div style="position:absolute;left:431.9px;top:854.66px;font:normal 12.42px/1 'Liberation Mono', monospace;color:#3b73b0;white-space:pre;">T1190</div>
<div style="position:absolute;left:544.6px;top:854.66px;font:normal 12.42px/1 'Liberation Mono', monospace;color:#343741;white-space:pre;">Initial Access</div>
<div style="position:absolute;left:816.9px;top:854.66px;font:normal 12.42px/1 'Liberation Mono', monospace;color:#343741;white-space:pre;">Apache: Attempt to access forbidden directory index.</div>
<div style="position:absolute;left:1351.6px;top:854.66px;font:normal 12.42px/1 'Liberation Mono', monospace;color:#343741;white-space:pre;">5</div>
<div style="position:absolute;left:1455.4px;top:854.66px;font:normal 12.42px/1 'Liberation Mono', monospace;color:#3b73b0;white-space:pre;">30306</div>
<svg style="position:absolute;left:0px;top:0px" width="1600" height="939" viewBox="0 0 1600 939"><path d="M69.2,725.4 L73.2,729.2 L69.2,733.0" fill="none" stroke="#555" stroke-width="1.3"/><path d="M69.2,790.5 L73.2,794.3 L69.2,798.1" fill="none" stroke="#555" stroke-width="1.3"/><path d="M69.2,855.6 L73.2,859.4 L69.2,863.2" fill="none" stroke="#555" stroke-width="1.3"/></svg>
</body></html>
